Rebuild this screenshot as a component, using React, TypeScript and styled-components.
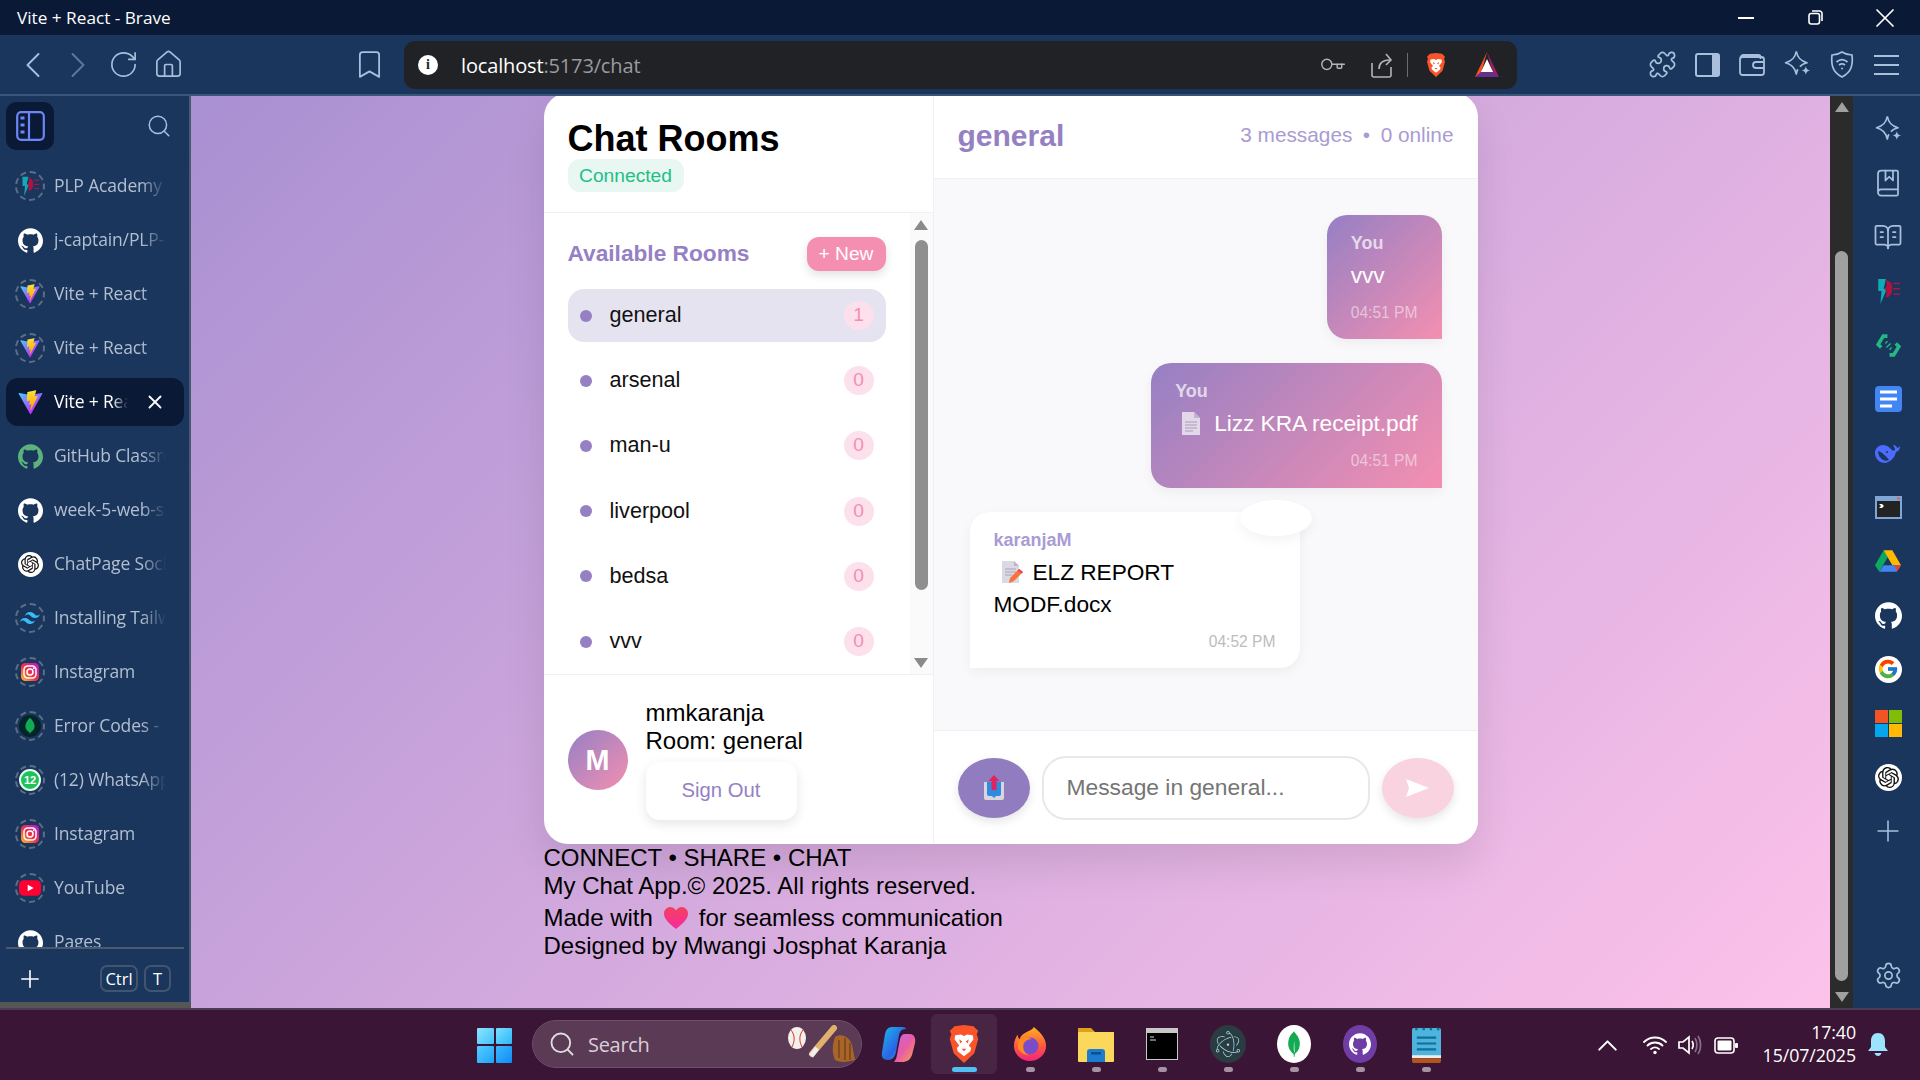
import React from "react";
import styled, { createGlobalStyle } from "styled-components";
import {
  ChevronLeft, ChevronRight, RotateCw, House, Bookmark, Puzzle, Search, Plus, Settings, Key, X, BookMarked, BookOpenText, ChevronUp,
} from "lucide-react";
import { SiElectron, SiGithub, SiMongodb, SiOpenai, SiTailwindcss } from "react-icons/si";
import { FcGoogle } from "react-icons/fc";

const UI = "'Open Sans','Noto Sans',sans-serif";
const WEB = "'Liberation Sans',Arial,sans-serif";
const PURPLE = "#9580c4";
const PINK = "#f48fb1";
const CHROME = "#1a365d";
const CHROME_DARK = "#0a1a36";
const ICON = "#a9bfdc";

const Global = createGlobalStyle`
  html, body { margin: 0; padding: 0; height: 100%; overflow: hidden; background: ${CHROME}; }
  * { box-sizing: border-box; }
`;

const Screen = styled.div`
  width: 1920px; height: 1080px; display: flex; flex-direction: column; overflow: hidden; font-family: ${WEB};
`;

/* ---------- window chrome ---------- */
const TitleBar = styled.header`
  height: 35px; flex: none; background: ${CHROME_DARK}; display: flex; align-items: center; padding-left: 17px;
  color: #fff; font: 17.2px ${UI};
`;
const WindowControls = styled.div` margin-left: auto; display: flex; `;
const WinBtn = styled.div`
  width: 69.5px; height: 35px; display: flex; align-items: center; justify-content: center; color: #fff;
`;
const Toolbar = styled.nav`
  height: 61px; flex: none; background: ${CHROME}; border-bottom: 2px solid #3a5578; display: flex; align-items: center;
  padding: 0 11px 0 10.5px; color: ${ICON};
`;
const NavBtn = styled.div<{ $dim?: boolean; $ml?: number }>`
  width: 45px; height: 45px; flex: none; display: flex; align-items: center; justify-content: center;
  color: ${(p) => (p.$dim ? "#60789b" : ICON)}; margin-left: ${(p) => p.$ml ?? 0}px;
`;
const AddressBar = styled.div`
  width: 1113px; height: 48px; margin: 1px 0 0 12.5px; background: #212226; border-radius: 11px; display: flex; align-items: center;
  padding: 0 17.6px 0 14px; flex: none;
`;
const InfoDot = styled.div`
  width: 20px; height: 20px; border-radius: 50%; background: #fff; color: #212226; display: flex; align-items: center;
  justify-content: center; font: 700 14px 'Liberation Serif', serif; flex: none;
`;
const Url = styled.div` margin-left: 23px; font: 20px ${UI}; letter-spacing: -0.15px; color: #fff; `;
const UrlRest = styled.span` color: #9b9b9f; `;
const AddrSlot = styled.div<{ $ml?: number }>`
  width: 24px; height: 30px; display: flex; align-items: center; justify-content: center; flex: none; margin-left: ${(p) => p.$ml ?? 0}px; color: #b4b4b6;
`;
const AddrSep = styled.div` width: 1px; height: 24px; background: #6c6c70; margin-left: 13px; flex: none; `;
const AddrEnd = styled.div` margin-left: auto; display: flex; align-items: center; `;
const ToolRight = styled.div` margin-left: auto; display: flex; `;
const ToolIcon = styled.div`
  width: 44.8px; height: 44px; display: flex; align-items: center; justify-content: center; color: ${ICON};
`;

const Main = styled.div` flex: 1; min-height: 0; display: flex; `;

/* ---------- left tab sidebar ---------- */
const TabBar = styled.aside`
  width: 191px; flex: none; background: ${CHROME}; border-right: 2px solid #4b5a70; display: flex; flex-direction: column;
`;
const TabHead = styled.div` height: 66px; flex: none; padding: 6px 0 0 6px; display: flex; align-items: flex-start; color: ${ICON}; `;
const SideToggle = styled.div`
  width: 48px; height: 48px; border-radius: 10px; background: ${CHROME_DARK}; display: flex; align-items: center; justify-content: center;
`;
const TabSearch = styled.div` margin: 11px 0 0 92px; color: ${ICON}; display: flex; `;
const TabList = styled.div`
  flex: 1; min-height: 0; overflow: hidden; display: flex; flex-direction: column; gap: 6px; padding: 0 5px 0 6px;
`;
const Tab = styled.div<{ $active?: boolean }>`
  height: 48px; flex: none; display: flex; align-items: center; border-radius: 12px; padding-left: 9px;
  background: ${(p) => (p.$active ? CHROME_DARK : "transparent")};
  color: ${(p) => (p.$active ? "#fff" : "#b3bfd0")};
`;
const FavSlot = styled.div<{ $ring?: boolean }>`
  width: 30px; height: 30px; flex: none; display: flex; align-items: center; justify-content: center; border-radius: 50%;
  border: 2px ${(p) => (p.$ring ? "dashed #5d6d84" : "solid transparent")}; 
`;
const TabLabel = styled.div<{ $w: number }>`
  margin-left: 9px; width: ${(p) => p.$w}px; white-space: nowrap; overflow: hidden; font: 17.5px ${UI}; letter-spacing: -0.15px; padding-bottom: 2px;
  -webkit-mask-image: linear-gradient(to right, #000 78%, transparent 100%);
  mask-image: linear-gradient(to right, #000 78%, transparent 100%);
`;
const TabClose = styled.div` margin-left: 16px; display: flex; color: #fff; `;
const TabFoot = styled.div`
  height: 55px; flex: none; margin: 0 5px 0 6px; border-top: 2px solid #4b5a70; display: flex; align-items: center; color: #fff; padding-top: 6px;
`;
const FootPlus = styled.div` margin-left: 10px; display: flex; `;
const Kbd = styled.div<{ $ml: number; $w: number }>`
  height: 27px; width: ${(p) => p.$w}px; margin-left: ${(p) => p.$ml}px; border: 2px solid #43546f; border-radius: 7px; color: #fff;
  display: flex; align-items: center; justify-content: center; font: 16.5px ${UI};
`;
const TabStrip = styled.div` height: 6px; flex: none; background: #565656; margin-right: -2px; `;

/* ---------- page ---------- */
const Viewport = styled.main`
  flex: 1; min-width: 0; overflow: hidden; display: flex; flex-direction: column; align-items: center;
  background: linear-gradient(135deg, #a990d2 0%, #d4aade 50%, #fcc2ea 100%);
`;
const Column = styled.div` width: 934px; margin-top: -3px; flex: none; `;
const Card = styled.section`
  height: 751px; background: #fff; border-radius: 24px; display: flex; overflow: hidden; box-shadow: 0 20px 40px rgba(0,0,0,.1);
`;
const Rooms = styled.div`
  width: 390px; flex: none; border-right: 1px solid #f0f0f0; display: flex; flex-direction: column;
`;
const RoomsHead = styled.div` padding: 24px 24px 20px; border-bottom: 1px solid #f0f0f0; `;
const Title = styled.h1` margin: 0; padding-top: 1px; font: 700 36px/41px ${WEB}; color: #000; `;
const Connected = styled.div`
  width: 116px; height: 33px; border-radius: 12px; background: #e8f7f1; color: #1fbf85; font: 19.2px/33px ${WEB}; text-align: center;
`;
const RoomsBody = styled.div` flex: 1; min-height: 0; display: flex; `;
const RoomsScroll = styled.div` flex: 1; min-width: 0; overflow: hidden; padding: 24px 24px 0 24px; `;
const RoomsTop = styled.div` display: flex; justify-content: space-between; align-items: center; height: 34px; margin-bottom: 18px; `;
const RoomsHeading = styled.h2` margin: 0; padding-bottom: 2px; font: 700 22.7px ${WEB}; color: ${PURPLE}; `;
const NewBtn = styled.button`
  width: 79px; height: 34px; border: 0; border-radius: 12px; background: ${PINK}; color: #fff; font: 19.2px ${WEB}; padding: 0;
  box-shadow: 0 4px 10px rgba(0,0,0,.12);
`;
const RoomRow = styled.div<{ $active?: boolean }>`
  height: 53.2px; margin-bottom: 12px; border-radius: 16px; display: flex; align-items: center; padding: 0 12px;
  background: ${(p) => (p.$active ? "#e6e3f1" : "transparent")};
`;
const RoomDot = styled.span` width: 12px; height: 12px; border-radius: 50%; background: ${PURPLE}; flex: none; `;
const RoomName = styled.span` margin-left: 18px; padding-bottom: 1px; font: 21.6px ${WEB}; color: #111; flex: 1; `;
const RoomBadge = styled.span`
  width: 30px; height: 29px; border-radius: 50%; background: #fce0eb; color: ${PINK}; font: 19.2px/28px ${WEB}; text-align: center; flex: none;
`;
const MiniRail = styled.div`
  width: 23px; flex: none; background: #fafafa; display: flex; flex-direction: column; align-items: center; padding-top: 7px;
`;
const Arrow = styled.div<{ $down?: boolean; $c: string; $mt?: number }>`
  width: 0; height: 0; flex: none; margin-top: ${(p) => p.$mt ?? 0}px;
  border-left: 7.5px solid transparent; border-right: 7.5px solid transparent;
  ${(p) => (p.$down ? `border-top: 10px solid ${p.$c};` : `border-bottom: 10px solid ${p.$c};`)}
`;
const Thumb = styled.div<{ $c: string; $h: number; $mt: number }>`
  width: 13px; height: ${(p) => p.$h}px; margin-top: ${(p) => p.$mt}px; border-radius: 7px; background: ${(p) => p.$c}; flex: none;
`;
const UserBar = styled.div`
  height: 170px; flex: none; border-top: 1px solid #f0f0f0; display: flex; align-items: center; gap: 18px; padding: 0 24px;
`;
const Avatar = styled.div`
  width: 60px; height: 60px; border-radius: 50%; flex: none; background: linear-gradient(135deg, ${PURPLE}, ${PINK});
  color: #fff; font: 700 28.8px/60px ${WEB}; text-align: center;
`;
const UserInfo = styled.div` font: 24px/28px ${WEB}; color: #000; `;
const SignOut = styled.button`
  display: block; width: 151px; height: 58px; margin-top: 7px; border: 0; border-radius: 14px; background: #fff; color: ${PURPLE};
  font: 20.3px ${WEB}; box-shadow: 0 4px 12px rgba(0,0,0,.1); padding: 0 0 2px;
`;

const Chat = styled.div` flex: 1; min-width: 0; display: flex; flex-direction: column; `;
const ChatHead = styled.div`
  height: 86px; flex: none; border-bottom: 1px solid #f0f0f0; display: flex; align-items: center; justify-content: space-between; padding: 0 24px;
`;
const ChatTitle = styled.h2` margin: 0; font: 700 30px ${WEB}; color: ${PURPLE}; `;
const ChatStats = styled.div` display: flex; gap: 10.5px; font: 20.8px ${WEB}; color: #a99bd4; padding-bottom: 2px; `;
const Messages = styled.div`
  flex: 1; min-height: 0; background: #f9f9fb; padding: 36px; display: flex; flex-direction: column; gap: 24px; overflow: hidden;
`;
const Bubble = styled.div<{ $mine?: boolean; $w?: number }>`
  position: relative; padding: 18px 24px 17px; flex: none;
  width: ${(p) => (p.$w ? `${p.$w}px` : "fit-content")};
  align-self: ${(p) => (p.$mine ? "flex-end" : "flex-start")};
  border-radius: ${(p) => (p.$mine ? "20px 20px 0 20px" : "20px 20px 20px 0")};
  background: ${(p) => (p.$mine ? `linear-gradient(135deg, ${PURPLE}, ${PINK})` : "#fff")};
  color: ${(p) => (p.$mine ? "#fff" : "#000")};
  box-shadow: 0 4px 12px rgba(0,0,0,.05);
`;
const Sender = styled.div<{ $mine?: boolean }>`
  font: 700 18px/20px ${WEB}; color: ${(p) => (p.$mine ? "rgba(255,255,255,.7)" : "#a99bd4")}; margin-bottom: 6px;
`;
const BubbleText = styled.div` font: 22.7px/32px ${WEB}; letter-spacing: -0.05px; white-space: nowrap; `;
const EmojiBox = styled.span`
  display: inline-block; width: 39px; height: 24px; vertical-align: -4px; padding-left: 7px;
`;
const Stamp = styled.div<{ $mine?: boolean }>`
  margin-top: 13px; text-align: right; font: 15.6px/18.4px ${WEB}; color: ${(p) => (p.$mine ? "rgba(255,255,255,.5)" : "#bcbcbc")};
`;
const Reaction = styled.div`
  position: absolute; top: -12px; right: -12px; width: 72px; height: 36px; border-radius: 50%; background: #fff; box-shadow: 0 4px 12px rgba(0,0,0,.05);
`;
const InputBar = styled.div`
  height: 114px; flex: none; border-top: 1px solid #f0f0f0; display: flex; align-items: center; gap: 12px; padding: 0 24px; background: #fff;
`;
const Round = styled.button<{ $c: string }>`
  width: 72px; height: 60px; border-radius: 50%; border: 0; background: ${(p) => p.$c}; flex: none; display: flex; align-items: center; justify-content: center;
  box-shadow: 0 4px 10px rgba(0,0,0,.1); padding: 0;
`;
const Field = styled.input`
  flex: 1; min-width: 0; height: 64px; border: 2px solid #e8e8e8; border-radius: 24px; padding: 0 23px; font: 22.8px ${WEB}; outline: 0; background: #fff;
  &::placeholder { color: #757575; }
`;
const Footer = styled.footer` font: 24px/28px ${WEB}; color: #000; `;
const FooterLine = styled.div<{ $tall?: boolean }>`
  white-space: nowrap; ${(p) => (p.$tall ? "padding-top: 4px; height: 32px;" : "height: 28px;")}
`;
const HeartBox = styled.span` display: inline-block; width: 24px; height: 22px; vertical-align: -3px; margin: 0 4.5px 0 4px; `;

/* ---------- page scrollbar + right rail ---------- */
const PageRail = styled.div`
  width: 23px; flex: none; background: #2b2b2b; display: flex; flex-direction: column; align-items: center; padding-top: 6px;
`;
const SideRail = styled.aside`
  width: 67px; flex: none; background: ${CHROME}; display: flex; flex-direction: column; align-items: center; padding: 6px 0 6px 3px; color: ${ICON};
`;
const RailIcon = styled.div<{ $end?: boolean }>`
  width: 54px; height: 54px; flex: none; display: flex; align-items: center; justify-content: center;
  ${(p) => (p.$end ? "margin-top: auto;" : "")}
`;

/* ---------- taskbar ---------- */
const Taskbar = styled.footer`
  height: 72px; flex: none; background: #3a1535; border-top: 2px solid #4d3a55; display: flex; align-items: center; padding-left: 477px; color: #fff;
`;
const StartGrid = styled.div`
  width: 35px; height: 35px; display: grid; grid-template-columns: 1fr 1fr; gap: 2px; flex: none;
`;
const StartCell = styled.div<{ $bg: string }>` background: ${(p) => p.$bg}; border-radius: 1px; `;
const SearchPill = styled.div`
  width: 330px; height: 48px; margin: 0 2px 2px 20px; border-radius: 24px; background: #5a3a55; border: 1px solid #6c4f68; display: flex; align-items: center; padding-left: 15px; flex: none; color: #ddd;
`;
const SearchLabel = styled.span` margin-left: 12px; font: 20px ${UI}; letter-spacing: -0.3px; color: #d9cfd6; `;
const SearchArt = styled.div` margin-left: auto; margin-right: 4px; display: flex; `;
const TaskItem = styled.div<{ $active?: boolean; $w?: number }>`
  width: ${(p) => p.$w ?? 66}px; height: 60px; flex: none; display: flex; flex-direction: column; align-items: center; padding-top: 11px; border-radius: 6px; margin-bottom: 2px;
  background: ${(p) => (p.$active ? "rgba(255,255,255,.07)" : "transparent")};
`;
const TaskIcon = styled.div` height: 38px; flex: none; display: flex; align-items: center; justify-content: center; `;
const TaskDot = styled.div<{ $active?: boolean }>`
  width: ${(p) => (p.$active ? 25 : 9)}px; height: 5px; border-radius: 3px; margin-top: 4px;
  background: ${(p) => (p.$active ? "#50c0f5" : "#a593a4")};
`;
const Tray = styled.div` margin-left: auto; display: flex; align-items: center; padding-right: 32px; `;
const TrayIcon = styled.div<{ $ml: number }>` display: flex; margin-left: ${(p) => p.$ml}px; color: #fff; `;
const Clock = styled.div`
  margin-left: 8px; width: 110px; text-align: right; font: 17.8px/22.5px ${UI}; letter-spacing: -0.1px; color: #fff; padding-bottom: 3px;
`;

/* ---------- drawn icons ---------- */
const ViteLogo = ({ s = 24 }: { s?: number }) => (
  <svg width={s} height={s} viewBox="0 0 410 404">
    <defs>
      <linearGradient id="va" x1="6" y1="33" x2="235" y2="344" gradientUnits="userSpaceOnUse"><stop stopColor="#41D1FF" /><stop offset="1" stopColor="#BD34FE" /></linearGradient>
      <linearGradient id="vb" x1="194" y1="8" x2="236" y2="292" gradientUnits="userSpaceOnUse"><stop stopColor="#FFEA83" /><stop offset=".08" stopColor="#FFDD35" /><stop offset="1" stopColor="#FFA800" /></linearGradient>
    </defs>
    <path fill="url(#va)" d="M399.641 59.5246L215.643 388.545C211.844 395.338 202.084 395.378 198.228 388.618L10.5817 59.5563C6.38087 52.1896 12.6802 43.2665 21.0281 44.7586L205.223 77.6824C206.398 77.8924 207.601 77.8904 208.776 77.6763L389.119 44.8058C397.439 43.2894 403.768 52.1434 399.641 59.5246Z" />
    <path fill="url(#vb)" d="M292.965 1.5744L156.801 28.2552C154.563 28.6937 152.906 30.5903 152.771 32.8664L144.395 174.33C144.198 177.662 147.258 180.248 150.51 179.498L188.42 170.749C191.967 169.931 195.172 173.055 194.443 176.622L183.18 231.775C182.422 235.487 185.907 238.661 189.532 237.56L212.947 230.446C216.577 229.344 220.065 232.527 219.297 236.242L201.398 322.875C200.278 328.294 207.486 331.249 210.492 326.603L212.5 323.5L323.454 102.072C325.312 98.3645 322.108 94.137 318.036 94.9228L279.014 102.454C275.347 103.161 272.227 99.746 273.262 96.1583L298.731 7.86689C299.767 4.27314 296.636 0.855181 292.965 1.5744Z" />
  </svg>
);
const PlpLogo = ({ s = 20 }: { s?: number }) => (
  <svg width={s} height={s} viewBox="0 0 24 24">
    <path fill="#12a9b5" d="M3 1h7L8 10h3L5 24l1-12H3z" />
    <path fill="#b5113f" d="M10 2c5 1 6 4 6 8s-2 8-6 8l1-6-2-1 2-5z" />
    <path stroke="#a01a4a" strokeWidth="1.4" d="M17 5h6M17 10h6M17 15h6" />
  </svg>
);
const InstaIcon = ({ s = 18 }: { s?: number }) => (
  <svg width={s} height={s} viewBox="0 0 24 24">
    <defs>
      <linearGradient id="ig" x1="0" y1="1" x2="1" y2="0"><stop stopColor="#fdc830" /><stop offset=".45" stopColor="#f0353f" /><stop offset="1" stopColor="#c013d8" /></linearGradient>
    </defs>
    <rect width="24" height="24" rx="6" fill="url(#ig)" />
    <rect x="4" y="4" width="16" height="16" rx="5" fill="none" stroke="#fff" strokeWidth="2" />
    <circle cx="12" cy="12" r="4" fill="none" stroke="#fff" strokeWidth="2" />
    <circle cx="17" cy="7" r="1.2" fill="#fff" />
  </svg>
);
const MongoDark = () => (
  <svg width="22" height="22" viewBox="0 0 24 24"><circle cx="12" cy="12" r="12" fill="#04242c" /><path fill="#13aa52" d="M12 3c3 3 5 6 5 9 0 4-3 6-4.400 7L12 21l-.6-2C10 18 7 16 7 12c0-3 2-6 5-9z" /></svg>
);
const WaBadge = styled.div`
  width: 22px; height: 22px; border-radius: 50%; background: #1fc15a; border: 2px solid #e9fff0; color: #fff; font: 700 11px/18px ${WEB}; text-align: center; flex: none;
`;
const YouTube = () => (
  <svg width="22" height="16" viewBox="0 0 24 17"><rect width="24" height="17" rx="5" fill="#ff0033" /><path fill="#fff" d="M9.500 5l6.500 3.500-6.500 3.500z" /></svg>
);
const WhiteDisc = styled.div<{ $s: number }>`
  width: ${(p) => p.$s}px; height: ${(p) => p.$s}px; border-radius: 50%; background: #fff; display: flex; align-items: center; justify-content: center; color: #111; flex: none;
`;
const SparkPlus = ({ s = 31 }: { s?: number }) => (
  <svg width={s} height={s} viewBox="0 0 26 26" fill="none" stroke="currentColor" strokeWidth="1.400" strokeLinejoin="round">
    <path d="M12 2c1 5 3 8 9 9.500-3 .8-4.800 1.800-6 3.300M12 2c-1 5-3 8-9 9.500 5 1.300 8 4 9 9.500.3-1.600.7-2.900 1.300-4" />
    <path fill="currentColor" stroke="none" d="M20 14.500c.5 2.300 1.300 3.100 3.500 3.500-2.200.5-3 1.200-3.500 3.500-.5-2.300-1.300-3-3.500-3.500 2.200-.4 3-1.200 3.500-3.500z" />
  </svg>
);
const GreenHex = () => (
  <svg width="27" height="25" viewBox="0 0 24 24" fill="none" stroke="#23b884" strokeWidth="3.400">
    <path d="M11 3H7L2 11l3 3M13 21h4l5-8-3-3" /><path strokeWidth="1.300" d="M10 14l4-4M9 10l2-2M13 16l2-2" />
  </svg>
);
const BlueNote = () => (
  <svg width="27" height="26" viewBox="0 0 27 26"><rect width="27" height="26" rx="4" fill="#4285f4" /><path stroke="#fff" strokeWidth="3" d="M5 6h17M5 13h17M5 20h12" /></svg>
);
const Whale = () => (
  <svg width="28" height="22" viewBox="0 0 28 22">
    <path fill="#4d6bfe" d="M1 11c0-5 4-8 8-8 4 0 7 3 9 5 1 1 2 1 3 0 0-2-1-3-2-5 3 0 4 2 4 3 1 0 2-1 3-2 0 3-1 5-4 6-1 5-5 10-11 11-4 0-10-3-10-10z" />
    <path fill="#1a365d" d="M4 9c4 1 8 5 11 9-2 1-4 1-6 0-3-2-5-5-5-9z" />
    <circle cx="13" cy="10" r="1" fill="#1a365d" />
  </svg>
);
const Terminal = () => (
  <svg width="27" height="23" viewBox="0 0 27 23"><rect width="27" height="23" fill="#7fa7d6" /><rect x="2" y="5" width="23" height="16" fill="#232323" /><path fill="#fff" d="M4 8h3l2 2-2 2H4l2-2z" /><rect x="22" y="1.500" width="3" height="2" fill="#e0604c" /></svg>
);
const Drive = ({ s = 24 }: { s?: number }) => (
  <svg width={s} height={s} viewBox="0 0 24 22">
    <path fill="#0da960" d="M8 1L0 15l4 6 8-14z" /><path fill="#ffba00" d="M8 1h8l8 14h-8z" /><path fill="#4285f4" d="M4 21l4-6h16l-4 6z" /><path fill="#ea4335" d="M20 21l4-6h-6z" />
  </svg>
);
const Microsoft = () => (
  <svg width="27" height="27" viewBox="0 0 27 27">
    <rect width="13" height="13" fill="#f35325" /><rect x="14" width="13" height="13" fill="#81bc06" /><rect y="14" width="13" height="13" fill="#05a6f0" /><rect x="14" y="14" width="13" height="13" fill="#ffba08" />
  </svg>
);
const BraveMark = ({ s }: { s: number }) => (
  <svg width={s} height={s} viewBox="0 0 24 24">
    <path fill="#fb542b" d="M12 0l6 .8 3 3-1 2 1 3-2.500 9L12 24l-6.500-6.200L3 8.800l1-3-1-2 3-3z" />
    <path fill="#fff" d="M6.500 6.500L10 6l2 1 2-1 3.500.5.500 2.500-3 4 1.500 1.500-.5 2-3 2.500-1 .8-1-.8-3-2.500-.5-2L9 13 6 9z" />
    <path fill="#fb542b" d="M9 9l2 1.500-1.500 1zM15 9l-2 1.500 1.500 1zM10.500 15h3L12 16.500z" />
  </svg>
);
const BatLogo = () => (
  <svg width="24" height="26" viewBox="0 0 24 26">
    <path fill="#f1541e" d="M12 0L0 25l6-3z" /><path fill="#9e1f63" d="M12 0l12 25-6-3z" /><path fill="#662d91" d="M0 25h24l-6-5H6z" /><path fill="#fff" d="M12 7l6 13H6z" />
  </svg>
);
const ShareArrow = () => (
  <svg width="24" height="26" viewBox="0 0 24 26" fill="none" stroke="currentColor" strokeWidth="1.600"><path d="M2 11v12c0 1 .6 2 2 2h15c1.200 0 2-1 2-2v-8" /><path d="M9 17c0-6 4-9 11-9" /><path d="M16 2l5 6-5 5" /></svg>
);
const WalletIcon = () => (
  <svg width="26" height="24" viewBox="0 0 26 24" fill="none" stroke="currentColor" strokeWidth="1.800"><path d="M1.500 5a3 3 0 013-3h15a2 2 0 012 2v2" /><rect x="1" y="4" width="24" height="18" rx="2.500" /><path d="M25 9h-8a3 3 0 000 6h8" /></svg>
);
const ShieldWifi = () => (
  <svg width="24" height="27" viewBox="0 0 24 27" fill="none" stroke="currentColor" strokeWidth="1.700"><path d="M12 1c3 2 6 3 10 3 1 9 0 17-10 22C2 21 1 13 2 4c4 0 7-1 10-3z" /><path d="M6.500 11c3.500-3 7.500-3 11 0M9 14c2-1.500 4-1.500 6 0" /><circle cx="12" cy="17.500" r="1" fill="currentColor" stroke="none" /></svg>
);
const Burger = () => (
  <svg width="25" height="22" viewBox="0 0 25 22" stroke="currentColor" strokeWidth="2"><path d="M0 2h25M0 11h25M0 20h25" /></svg>
);
const PanelRight = () => (
  <svg width="25" height="24" viewBox="0 0 25 24"><rect x="1" y="1" width="23" height="22" rx="2" fill="none" stroke="currentColor" strokeWidth="2" /><path fill="currentColor" d="M17 1h5a2 2 0 012 2v18a2 2 0 01-2 2h-5z" /></svg>
);
const SidebarToggle = () => (
  <svg width="29" height="30" viewBox="0 0 29 30" fill="none" stroke="#6e86f5" strokeWidth="2.200"><rect x="1.200" y="1.200" width="26.600" height="27.600" rx="4" /><path d="M13 1v28" /><path strokeWidth="3" d="M4.500 7h4M4.500 14h4M4.500 21h4" /></svg>
);
const RestoreIcon = () => (
  <svg width="15" height="15" viewBox="0 0 15 15" fill="none" stroke="#fff" strokeWidth="1.600"><rect x="1" y="3.500" width="10.500" height="10.500" rx="2.200" /><path d="M4 1h7.500A2.500 2.500 0 0114 3.500V11" /></svg>
);
const DocEmoji = () => (
  <svg width="18" height="24" viewBox="0 0 18 24"><path fill="#e3d8ea" d="M0 1h12l6 6v17H0z" /><path fill="#c4b4cf" d="M12 1l6 6h-6z" /><path stroke="#a99bb5" strokeWidth="1.200" d="M3 11h12M3 14h12M3 17h12M3 20h8" /></svg>
);
const MemoEmoji = () => (
  <svg width="23" height="24" viewBox="0 0 23 24"><path fill="#dcd8e4" d="M1 1h12l5 5v17H1z" /><path fill="#bdb6c9" d="M13 1l5 5h-5z" /><path stroke="#a9a1b6" strokeWidth="1.200" d="M4 9h11M4 12h11M4 15h7" /><path fill="#f5733d" d="M18 9l4 3-9 9-5 2 1-5z" /><path fill="#e8455a" d="M18 9l4 3-1.500 1.500-4-3z" /></svg>
);
const OutboxEmoji = () => (
  <svg width="22" height="25" viewBox="0 0 22 25"><path fill="#d9d6de" d="M1 7h20v16a2 2 0 01-2 2H3a2 2 0 01-2-2z" /><path fill="#2f8ae0" d="M4 7h14v12c0 1-1 2-2 2h-3l-2 2-2-2H6c-1 0-2-1-2-2z" /><path fill="#e0245e" d="M11 0l5.500 6H13.500v9h-5V6H5.500z" /></svg>
);
const SendGlyph = () => (
  <svg width="23" height="18" viewBox="0 0 23 18"><path fill="#fff" d="M0 0l23 9L0 18l3-9z" /></svg>
);
const Heart = () => (
  <svg width="24" height="22" viewBox="0 0 24 22"><defs><linearGradient id="ht" x1="0" y1="0" x2="0" y2="1"><stop stopColor="#f4405e" /><stop offset="1" stopColor="#f62aa0" /></linearGradient></defs><path fill="url(#ht)" d="M12 22C3 15 0 11 0 6.500 0 3 2.700 0 6.200 0 8.700 0 10.800 1.300 12 3.400 13.200 1.300 15.300 0 17.800 0 21.300 0 24 3 24 6.500 24 11 21 15 12 22z" /></svg>
);
const SearchArtwork = () => (
  <svg width="70" height="38" viewBox="0 0 70 38">
    <ellipse cx="10" cy="13" rx="9" ry="11" fill="#f4f0ea" /><path stroke="#d33" strokeWidth="1" fill="none" d="M4 5c4 5 4 11 1 17M16 5c-4 5-4 11-1 17" />
    <path stroke="#e0b16b" strokeWidth="6" strokeLinecap="round" d="M47 3L25 29" /><path stroke="#eee" strokeWidth="5" d="M30 23l-6 8" />
    <path fill="#a9642a" d="M48 12c6-4 14-1 17 8l3 15c-6 2-15 3-20 0-3-7-3-15 0-23z" /><path stroke="#6e3f18" strokeWidth="1.300" d="M52 15v18M58 13v22M63 18v17" />
  </svg>
);
const Copilot = () => (
  <svg width="36" height="38" viewBox="0 0 36 38">
    <defs>
      <linearGradient id="c1" x1="0" y1="0" x2="1" y2="1"><stop stopColor="#1db9e8" /><stop offset=".6" stopColor="#2a62e8" /><stop offset="1" stopColor="#28d59c" /></linearGradient>
      <linearGradient id="c2" x1="0" y1="0" x2="1" y2="1"><stop stopColor="#c26be6" /><stop offset=".5" stopColor="#e85ba8" /><stop offset="1" stopColor="#f6a44c" /></linearGradient>
    </defs>
    <path fill="url(#c2)" d="M14 37h8c5 0 8-2 10-7l3-12c1-5-1-9-5-9h-5c-3 0-4 2-5 5l-3 16c-.5 3-1.500 5-3 7z" />
    <path fill="url(#c1)" d="M12 2h10c3 0 4 1 4 2-4 0-6 2-7 6l-3 17c-1 5-4 8-8 8-5 0-7-3-6-8L5 9c1-4 3-7 7-7z" />
  </svg>
);
const Firefox = () => (
  <svg width="34" height="38" viewBox="0 0 36 38">
    <defs>
      <linearGradient id="ff" x1="0" y1="0" x2="0" y2="1"><stop stopColor="#ffb01f" /><stop offset=".55" stopColor="#ff5a3d" /><stop offset="1" stopColor="#f5237c" /></linearGradient>
    </defs>
    <path fill="url(#ff)" d="M22 1c6 5 13 11 13 20 0 9-8 16-17 16S1 30 1 21c0-5 2-9 4-12 0 3 1 4 2 5 1-4 4-6 8-8 3-1 6-3 7-5z" />
    <circle cx="18" cy="21" r="9" fill="#7b4cc9" /><path fill="#ff8a1f" d="M7 14c4-3 10-3 13 0-5 0-8 2-9 6-1 5 2 9 6 11-6 0-11-4-12-9 0-3 1-6 2-8z" />
  </svg>
);
const Folder = () => (
  <svg width="36" height="38" viewBox="0 0 36 38">
    <path fill="#e0a11a" d="M0 3h13l4 4h19v6H0z" /><rect y="7" width="36" height="30" rx="1" fill="#fbd75b" />
    <path fill="#1c7ccf" d="M9 27c0-2 1-3 3-3h12c2 0 3 1 3 3v10H9z" /><rect x="13" y="27" width="10" height="2.500" fill="#0b4f94" />
  </svg>
);
const Cmd = () => (
  <svg width="32" height="32" viewBox="0 0 32 32"><rect width="32" height="32" fill="#c8c8c8" /><rect x="1" y="5" width="30" height="26" fill="#000" /><path stroke="#ddd" strokeWidth="1" d="M4 9h4M4 12h6" /></svg>
);
const ElectronBox = styled.div`
  width: 36px; height: 38px; border-radius: 50%; background: #2b3b42; color: #a7e3ec; display: flex; align-items: center; justify-content: center;
`;
const MongoBox = styled.div`
  width: 34px; height: 38px; border-radius: 50%; background: #fff; color: #13aa52; display: flex; align-items: center; justify-content: center;
`;
const GitBox = styled.div`
  width: 34px; height: 38px; border-radius: 50%; background: #6f3da5; color: #fff; display: flex; align-items: center; justify-content: center;
`;
const NotePad = () => (
  <svg width="29" height="37" viewBox="0 0 36 38" preserveAspectRatio="none">
    <rect y="2" width="36" height="30" rx="2" fill="#4fb4dd" /><path fill="#eee" d="M0 30h36v3H0z" /><path fill="#b5531c" d="M0 33h36v3a2 2 0 01-2 2H2a2 2 0 01-2-2z" />
    <path stroke="#0f6f96" strokeWidth="2.200" d="M6 12h24M6 18h24M6 24h24" /><path stroke="#0f6f96" strokeWidth="2.500" strokeDasharray="3 6" d="M4 3h30" />
  </svg>
);
const Wifi = () => (
  <svg width="24" height="20" viewBox="0 0 24 20" fill="none" stroke="#fff" strokeWidth="1.800" strokeLinecap="round"><path d="M1 7c6-6 16-6 22 0M4.500 10.500c4-4 11-4 15 0M8 14c2.500-2 5.500-2 8 0" /><circle cx="12" cy="17.500" r="1.700" fill="#fff" stroke="none" /></svg>
);
const Speaker = () => (
  <svg width="24" height="20" viewBox="0 0 24 20" fill="none" stroke="#fff" strokeWidth="1.700"><path d="M1 7v6h4l6 5V2L5 7z" /><path d="M14 6c1.500 2.500 1.500 5.500 0 8" /><path stroke="#8a6f88" d="M17 3c2.500 4 2.500 10 0 14M20 1c3.500 5 3.500 13 0 18" /></svg>
);
const Battery = () => (
  <svg width="24" height="17" viewBox="0 0 24 17"><rect x="1" y="1" width="19" height="15" rx="3" fill="none" stroke="#fff" strokeWidth="1.600" /><rect x="3.500" y="3.500" width="14" height="10" rx="1" fill="#fff" /><rect x="21" y="6" width="3" height="5" rx="1" fill="#fff" /></svg>
);
const BellIcon = () => (
  <svg width="20" height="24" viewBox="0 0 20 24"><path fill="#9be3ff" d="M10 0c4.500 0 7 3.500 7 8v6l3 4H0l3-4V8c0-4.500 2.500-8 7-8z" /><path fill="#9be3ff" d="M6.500 20h7c-.5 2-2 3-3.500 3s-3-1-3.500-3z" /></svg>
);

const tabs: { key: string; label: string; fav: React.ReactNode; ring?: boolean }[] = [
  { key: "plp", label: "PLP Academy", fav: <PlpLogo />, ring: true },
  { key: "gh1", label: "j-captain/PLP-MERN", fav: <SiGithub size={25} color="#fff" /> },
  { key: "v1", label: "Vite + React", fav: <ViteLogo s={20} />, ring: true },
  { key: "v2", label: "Vite + React", fav: <ViteLogo s={20} />, ring: true },
];
const tabsAfter: typeof tabs = [
  { key: "gc", label: "GitHub Classroom", fav: <SiGithub size={25} color="#5cb27c" /> },
  { key: "w5", label: "week-5-web-sockets", fav: <SiGithub size={25} color="#fff" /> },
  { key: "cp", label: "ChatPage Socket", fav: <WhiteDisc $s={25}><SiOpenai size={18} /></WhiteDisc> },
  { key: "tw", label: "Installing Tailwind", fav: <SiTailwindcss size={20} color="#38bdf8" />, ring: true },
  { key: "ig", label: "Instagram", fav: <InstaIcon />, ring: true },
  { key: "err", label: "Error Codes - MongoDB", fav: <MongoDark />, ring: true },
  { key: "wa", label: "(12) WhatsApp", fav: <WaBadge>12</WaBadge>, ring: true },
  { key: "ig2", label: "Instagram", fav: <InstaIcon />, ring: true },
  { key: "yt", label: "YouTube", fav: <YouTube />, ring: true },
  { key: "pg", label: "Pages", fav: <SiGithub size={25} color="#fff" /> },
];
const rooms = [
  { name: "general", n: 1, active: true },
  { name: "arsenal", n: 0 },
  { name: "man-u", n: 0 },
  { name: "liverpool", n: 0 },
  { name: "bedsa", n: 0 },
  { name: "vvv", n: 0 },
];

export default function App() {
  return (
    <Screen>
      <Global />
      <TitleBar>
        Vite + React - Brave
        <WindowControls>
          <WinBtn><svg width="16" height="2"><rect width="16" height="2" fill="#fff" /></svg></WinBtn>
          <WinBtn><RestoreIcon /></WinBtn>
          <WinBtn><X size={32} strokeWidth={1.3} /></WinBtn>
        </WindowControls>
      </TitleBar>
      <Toolbar>
        <NavBtn><ChevronLeft size={44} strokeWidth={1.05} /></NavBtn>
        <NavBtn $dim><ChevronRight size={44} strokeWidth={1.05} /></NavBtn>
        <NavBtn><RotateCw size={31} strokeWidth={1.3} /></NavBtn>
        <NavBtn><House size={31} strokeWidth={1.3} /></NavBtn>
        <NavBtn $ml={156}><Bookmark size={33} strokeWidth={1.3} /></NavBtn>
        <AddressBar>
          <InfoDot>i</InfoDot>
          <Url>localhost<UrlRest>:5173/chat</UrlRest></Url>
          <AddrEnd>
            <AddrSlot><Key size={22} strokeWidth={1.6} style={{ transform: "rotate(45deg)" }} /></AddrSlot>
            <AddrSlot $ml={26}><ShareArrow /></AddrSlot>
            <AddrSep />
            <AddrSlot $ml={16}><BraveMark s={26} /></AddrSlot>
            <AddrSlot $ml={27}><BatLogo /></AddrSlot>
          </AddrEnd>
        </AddressBar>
        <ToolRight>
          <ToolIcon><Puzzle size={29} strokeWidth={1.4} /></ToolIcon>
          <ToolIcon><PanelRight /></ToolIcon>
          <ToolIcon><WalletIcon /></ToolIcon>
          <ToolIcon><SparkPlus /></ToolIcon>
          <ToolIcon><ShieldWifi /></ToolIcon>
          <ToolIcon><Burger /></ToolIcon>
        </ToolRight>
      </Toolbar>
      <Main>
        <TabBar>
          <TabHead>
            <SideToggle><SidebarToggle /></SideToggle>
            <TabSearch><Search size={26} strokeWidth={1.4} /></TabSearch>
          </TabHead>
          <TabList>
            {tabs.map((t) => (
              <Tab key={t.key}>
                <FavSlot $ring={t.ring}>{t.fav}</FavSlot>
                <TabLabel $w={112}>{t.label}</TabLabel>
              </Tab>
            ))}
            <Tab $active>
              <FavSlot><ViteLogo s={25} /></FavSlot>
              <TabLabel $w={74}>Vite + React</TabLabel>
              <TabClose><X size={22} strokeWidth={2} /></TabClose>
            </Tab>
            {tabsAfter.map((t) => (
              <Tab key={t.key}>
                <FavSlot $ring={t.ring}>{t.fav}</FavSlot>
                <TabLabel $w={112}>{t.label}</TabLabel>
              </Tab>
            ))}
          </TabList>
          <TabFoot>
            <FootPlus><Plus size={28} strokeWidth={1.4} /></FootPlus>
            <Kbd $ml={56} $w={38}>Ctrl</Kbd>
            <Kbd $ml={6} $w={27}>T</Kbd>
          </TabFoot>
          <TabStrip />
        </TabBar>
        <Viewport>
          <Column>
            <Card>
              <Rooms>
                <RoomsHead>
                  <Title>Chat Rooms</Title>
                  <Connected>Connected</Connected>
                </RoomsHead>
                <RoomsBody>
                  <RoomsScroll>
                    <RoomsTop>
                      <RoomsHeading>Available Rooms</RoomsHeading>
                      <NewBtn>+ New</NewBtn>
                    </RoomsTop>
                    {rooms.map((r) => (
                      <RoomRow key={r.name} $active={r.active}>
                        <RoomDot />
                        <RoomName>{r.name}</RoomName>
                        <RoomBadge>{r.n}</RoomBadge>
                      </RoomRow>
                    ))}
                  </RoomsScroll>
                  <MiniRail>
                    <Arrow $c="#8a8a8a" />
                    <Thumb $c="#8f8f8f" $h={350} $mt={10} />
                    <Arrow $down $c="#8a8a8a" $mt={68} />
                  </MiniRail>
                </RoomsBody>
                <UserBar>
                  <Avatar>M</Avatar>
                  <UserInfo>
                    mmkaranja<br />Room: general
                    <SignOut>Sign Out</SignOut>
                  </UserInfo>
                </UserBar>
              </Rooms>
              <Chat>
                <ChatHead>
                  <ChatTitle>general</ChatTitle>
                  <ChatStats><span>3 messages</span><span>•</span><span>0 online</span></ChatStats>
                </ChatHead>
                <Messages>
                  <Bubble $mine>
                    <Sender $mine>You</Sender>
                    <BubbleText>vvv</BubbleText>
                    <Stamp $mine>04:51 PM</Stamp>
                  </Bubble>
                  <Bubble $mine>
                    <Sender $mine>You</Sender>
                    <BubbleText><EmojiBox><DocEmoji /></EmojiBox>Lizz KRA receipt.pdf</BubbleText>
                    <Stamp $mine>04:51 PM</Stamp>
                  </Bubble>
                  <Bubble $w={330}>
                    <Reaction />
                    <Sender>karanjaM</Sender>
                    <BubbleText><EmojiBox><MemoEmoji /></EmojiBox>ELZ REPORT<br />MODF.docx</BubbleText>
                    <Stamp>04:52 PM</Stamp>
                  </Bubble>
                </Messages>
                <InputBar>
                  <Round $c="#917cc0"><OutboxEmoji /></Round>
                  <Field placeholder="Message in general..." />
                  <Round $c="#f9d3e0"><SendGlyph /></Round>
                </InputBar>
              </Chat>
            </Card>
            <Footer>
              <FooterLine>CONNECT • SHARE • CHAT</FooterLine>
              <FooterLine>My Chat App.© 2025. All rights reserved.</FooterLine>
              <FooterLine $tall>Made with <HeartBox><Heart /></HeartBox> for seamless communication</FooterLine>
              <FooterLine>Designed by Mwangi Josphat Karanja</FooterLine>
            </Footer>
          </Column>
        </Viewport>
        <PageRail>
          <Arrow $c="#a0a0a0" />
          <Thumb $c="#a0a0a0" $h={730} $mt={139} />
          <Arrow $down $c="#a0a0a0" $mt={11} />
        </PageRail>
        <SideRail>
          <RailIcon><SparkPlus /></RailIcon>
          <RailIcon><BookMarked size={30} strokeWidth={1.4} /></RailIcon>
          <RailIcon><BookOpenText size={30} strokeWidth={1.4} /></RailIcon>
          <RailIcon><PlpLogo s={26} /></RailIcon>
          <RailIcon><GreenHex /></RailIcon>
          <RailIcon><BlueNote /></RailIcon>
          <RailIcon><Whale /></RailIcon>
          <RailIcon><Terminal /></RailIcon>
          <RailIcon><Drive s={26} /></RailIcon>
          <RailIcon><SiGithub size={27} color="#fff" /></RailIcon>
          <RailIcon><WhiteDisc $s={27}><FcGoogle size={22} /></WhiteDisc></RailIcon>
          <RailIcon><Microsoft /></RailIcon>
          <RailIcon><WhiteDisc $s={27}><SiOpenai size={21} /></WhiteDisc></RailIcon>
          <RailIcon><Plus size={34} strokeWidth={1.1} /></RailIcon>
          <RailIcon $end><Settings size={29} strokeWidth={1.4} /></RailIcon>
        </SideRail>
      </Main>
      <Taskbar>
        <StartGrid>
          <StartCell $bg="linear-gradient(135deg,#8be4ff,#43c2fb)" />
          <StartCell $bg="linear-gradient(135deg,#7adfff,#2db6fb)" />
          <StartCell $bg="linear-gradient(135deg,#58cbff,#1aa5fb)" />
          <StartCell $bg="linear-gradient(135deg,#3ab8ff,#0f8cf5)" />
        </StartGrid>
        <SearchPill>
          <Search size={28} strokeWidth={1.6} />
          <SearchLabel>Search</SearchLabel>
          <SearchArt><SearchArtwork /></SearchArt>
        </SearchPill>
        <TaskItem $w={67}><TaskIcon><Copilot /></TaskIcon></TaskItem>
        <TaskItem $active><TaskIcon><BraveMark s={38} /></TaskIcon><TaskDot $active /></TaskItem>
        <TaskItem><TaskIcon><Firefox /></TaskIcon><TaskDot /></TaskItem>
        <TaskItem><TaskIcon><Folder /></TaskIcon><TaskDot /></TaskItem>
        <TaskItem><TaskIcon><Cmd /></TaskIcon><TaskDot /></TaskItem>
        <TaskItem><TaskIcon><ElectronBox><SiElectron size={26} /></ElectronBox></TaskIcon><TaskDot /></TaskItem>
        <TaskItem><TaskIcon><MongoBox><SiMongodb size={26} /></MongoBox></TaskIcon><TaskDot /></TaskItem>
        <TaskItem><TaskIcon><GitBox><SiGithub size={22} /></GitBox></TaskIcon><TaskDot /></TaskItem>
        <TaskItem><TaskIcon><NotePad /></TaskIcon><TaskDot /></TaskItem>
        <Tray>
          <TrayIcon $ml={0}><ChevronUp size={33} strokeWidth={1.5} /></TrayIcon>
          <TrayIcon $ml={19.5}><Wifi /></TrayIcon>
          <TrayIcon $ml={11}><Speaker /></TrayIcon>
          <TrayIcon $ml={12}><Battery /></TrayIcon>
          <Clock>17:40<br />15/07/2025</Clock>
          <TrayIcon $ml={12}><BellIcon /></TrayIcon>
        </Tray>
      </Taskbar>
    </Screen>
  );
}
